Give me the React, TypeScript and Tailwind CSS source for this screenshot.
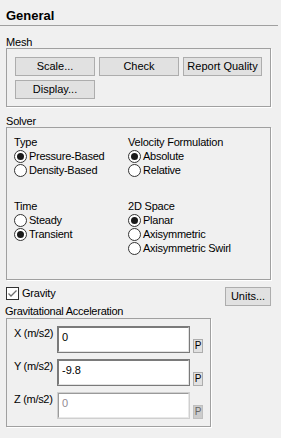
import React from "react";

const FONT = "font-['Liberation_Sans',Arial,sans-serif]";

function Btn({ children, w }: { children: React.ReactNode; w: string }) {
  return (
    <div
      className={`${w} h-[19px] border border-[#adadad] bg-[#e1e1e1] flex items-center justify-center text-[11px] leading-none text-black whitespace-nowrap`}
    >
      {children}
    </div>
  );
}

function Radio({ checked, label }: { checked?: boolean; label: string }) {
  return (
    <div className="flex items-center h-[14px]">
      <svg width="13" height="13" viewBox="0 0 13 13" className="shrink-0">
        <circle cx="6.5" cy="6.5" r="6" fill="#ffffff" stroke="#333333" strokeWidth="1" />
        {checked && <circle cx="6.5" cy="6.5" r="3.5" fill="#1a1a1a" />}
      </svg>
      <span className="ml-[2px] leading-[14px] tracking-[-0.25px] whitespace-nowrap">{label}</span>
    </div>
  );
}

function GroupLabel({ children }: { children: React.ReactNode }) {
  return <div className="leading-[14px] h-[14px] tracking-[-0.2px] whitespace-nowrap">{children}</div>;
}

function Field({ value, disabled }: { value: string; disabled?: boolean }) {
  return (
    <div
      className={`w-[133px] h-[27px] border ${
        disabled ? "border-[#cfcfcf]" : "border-[#7a7a7a]"
      } bg-white`}
    >
      <div
        className={`w-full h-full border-t border-l border-r border-b ${
          disabled
            ? "border-t-[#9a9a9a] border-l-[#9a9a9a] border-r-[#e8e8e8] border-b-[#e8e8e8]"
            : "border-t-[#7a7a7a] border-l-[#7a7a7a] border-r-[#e3e3e3] border-b-[#e3e3e3]"
        } pl-[3px] pt-[2px] leading-[14px] text-[11px] ${disabled ? "text-[#938a93]" : "text-black"}`}
      >
        {value}
      </div>
    </div>
  );
}

function PBtn({ disabled }: { disabled?: boolean }) {
  return (
    <div
      className={`ml-[3px] w-[10px] h-[14px] border flex items-center justify-center text-[10px] leading-none ${
        disabled
          ? "bg-[#cccccc] border-[#bfbfbf] text-[#666666]"
          : "bg-[#e1e1e1] border-[#adadad] text-black"
      }`}
    >
      P
    </div>
  );
}

function FieldRow({ label, value, disabled }: { label: string; value: string; disabled?: boolean }) {
  return (
    <div className="flex items-end">
      <div className="w-[43px] self-start leading-[14px] tracking-[-0.3px] whitespace-nowrap">{label}</div>
      <Field value={value} disabled={disabled} />
      <PBtn disabled={disabled} />
    </div>
  );
}

export default function App() {
  return (
    <div className={`${FONT} w-[281px] h-[438px] bg-[#f0f0f0] text-[11px] text-black overflow-hidden`}>
      {/* Header */}
      <div className="w-[278px] h-[26px] border-b border-[#a0a0a0] pt-[8px] pl-[6px]">
        <div className="text-[13px] font-bold leading-[16px]">General</div>
      </div>

      {/* Mesh */}
      <div className="mt-[9px] pl-[6px] h-[13px] leading-[14px] tracking-[-0.2px]">Mesh</div>
      <div className="ml-[6px] w-[265px] h-[59px] border border-[#a0a0a0] shadow-[1px_1px_0_#ffffff] pt-[8px] pl-[8px]">
        <div className="flex gap-[4px]">
          <Btn w="w-[80px]">Scale...</Btn>
          <Btn w="w-[80px]">Check</Btn>
          <Btn w="w-[79px]">Report Quality</Btn>
        </div>
        <div className="flex mt-[4px]">
          <Btn w="w-[80px]">Display...</Btn>
        </div>
      </div>

      {/* Solver */}
      <div className="mt-[7px] pl-[6px] h-[13px] leading-[14px] tracking-[-0.2px]">Solver</div>
      <div className="ml-[6px] w-[265px] h-[153px] border border-[#a0a0a0] shadow-[1px_1px_0_#ffffff] pt-[7px] pl-[7px] flex">
        <div className="w-[114px] flex flex-col">
          <GroupLabel>Type</GroupLabel>
          <Radio checked label="Pressure-Based" />
          <Radio label="Density-Based" />
          <div className="mt-[22px]">
            <GroupLabel>Time</GroupLabel>
            <Radio label="Steady" />
            <Radio checked label="Transient" />
          </div>
        </div>
        <div className="flex flex-col">
          <GroupLabel>Velocity Formulation</GroupLabel>
          <Radio checked label="Absolute" />
          <Radio label="Relative" />
          <div className="mt-[22px]">
            <GroupLabel>2D Space</GroupLabel>
            <Radio checked label="Planar" />
            <Radio label="Axisymmetric" />
            <Radio label="Axisymmetric Swirl" />
          </div>
        </div>
      </div>

      {/* Gravity row */}
      <div className="mt-[7px] pl-[6px] w-[271px] flex items-start">
        <div className="flex flex-col">
          <div className="flex items-center h-[13px]">
            <svg width="13" height="13" viewBox="0 0 13 13" className="shrink-0">
              <rect x="0.5" y="0.5" width="12" height="12" fill="#ffffff" stroke="#333333" />
              <polyline
                points="2.5,6.5 5,9 10.5,3.5"
                fill="none"
                stroke="#6f6f6f"
                strokeWidth="1.3"
              />
            </svg>
            <span className="ml-[3px] leading-[13px] tracking-[-0.2px]">Gravity</span>
          </div>
          <div className="mt-[4px] -ml-[1px] h-[14px] leading-[14px] tracking-[-0.25px] whitespace-nowrap">
            Gravitational Acceleration
          </div>
        </div>
        <div className="ml-auto">
          <Btn w="w-[46px]">Units...</Btn>
        </div>
      </div>

      {/* Gravitational box */}
      <div className="ml-[6px] w-[205px] h-[109px] border border-[#a0a0a0] shadow-[1px_1px_0_#ffffff] pt-[7px] pl-[7px] flex flex-col gap-[6px]">
        <FieldRow label="X (m/s2)" value="0" />
        <FieldRow label="Y (m/s2)" value="-9.8" />
        <FieldRow label="Z (m/s2)" value="0" disabled />
      </div>
    </div>
  );
}
